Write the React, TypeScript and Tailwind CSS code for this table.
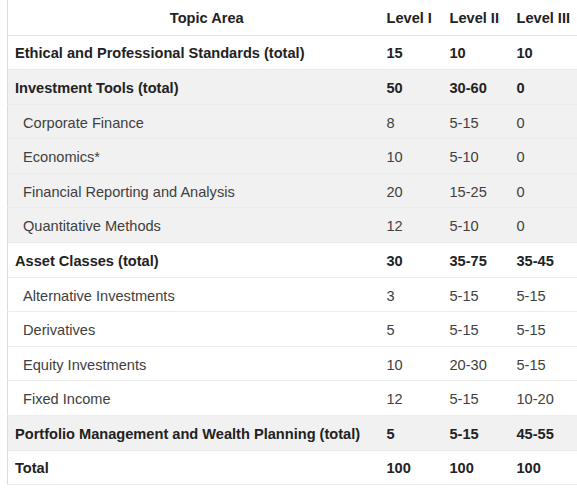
type Row = {
  topic: string;
  l1: string;
  l2: string;
  l3: string;
  bold?: boolean;
  shaded?: boolean;
};

const rows: Row[] = [
  { topic: "Ethical and Professional Standards (total)", l1: "15", l2: "10", l3: "10", bold: true },
  { topic: "Investment Tools (total)", l1: "50", l2: "30-60", l3: "0", bold: true, shaded: true },
  { topic: "Corporate Finance", l1: "8", l2: "5-15", l3: "0", shaded: true },
  { topic: "Economics*", l1: "10", l2: "5-10", l3: "0", shaded: true },
  { topic: "Financial Reporting and Analysis", l1: "20", l2: "15-25", l3: "0", shaded: true },
  { topic: "Quantitative Methods", l1: "12", l2: "5-10", l3: "0", shaded: true },
  { topic: "Asset Classes (total)", l1: "30", l2: "35-75", l3: "35-45", bold: true },
  { topic: "Alternative Investments", l1: "3", l2: "5-15", l3: "5-15" },
  { topic: "Derivatives", l1: "5", l2: "5-15", l3: "5-15" },
  { topic: "Equity Investments", l1: "10", l2: "20-30", l3: "5-15" },
  { topic: "Fixed Income", l1: "12", l2: "5-15", l3: "10-20" },
  { topic: "Portfolio Management and Wealth Planning (total)", l1: "5", l2: "5-15", l3: "45-55", bold: true, shaded: true },
  { topic: "Total", l1: "100", l2: "100", l3: "100", bold: true },
];

export default function App() {
  return (
    <div className="h-[488px] w-[577px] overflow-hidden bg-white pl-[7px] font-['Liberation_Sans',Arial,sans-serif] text-[14.6px]">
      <table className="w-[570px] table-fixed border-collapse border-l border-[#dcdcdc]">
        <colgroup>
          <col className="w-[371px]" />
          <col className="w-[63px]" />
          <col className="w-[67px]" />
          <col className="w-[69px]" />
        </colgroup>
        <thead>
          <tr className="h-[35px] border-b border-[#e2e2e2] font-bold text-[#222]">
            <th className="pt-[3px] pl-[27px] text-center">Topic Area</th>
            <th className="pt-[3px] pl-[8px] text-left">Level I</th>
            <th className="pt-[3px] pl-[8px] text-left">Level II</th>
            <th className="pt-[3px] pl-[8px] text-left">Level III</th>
          </tr>
        </thead>
        <tbody>
          {rows.map((r) => (
            <tr
              key={r.topic}
              className={`h-[34.6px] border-b border-[#ececec] ${r.shaded ? "bg-[#f1f1f1]" : "bg-white"} ${
                r.bold ? "font-bold text-[#222]" : "text-[#404040]"
              }`}
            >
              <td className={`whitespace-nowrap pt-[4px] ${r.bold ? "pl-[7px]" : "pl-[15px]"}`}>{r.topic}</td>
              <td className="pt-[4px] pl-[8px]">{r.l1}</td>
              <td className="pt-[4px] pl-[8px]">{r.l2}</td>
              <td className="pt-[4px] pl-[8px]">{r.l3}</td>
            </tr>
          ))}
        </tbody>
      </table>
    </div>
  );
}
